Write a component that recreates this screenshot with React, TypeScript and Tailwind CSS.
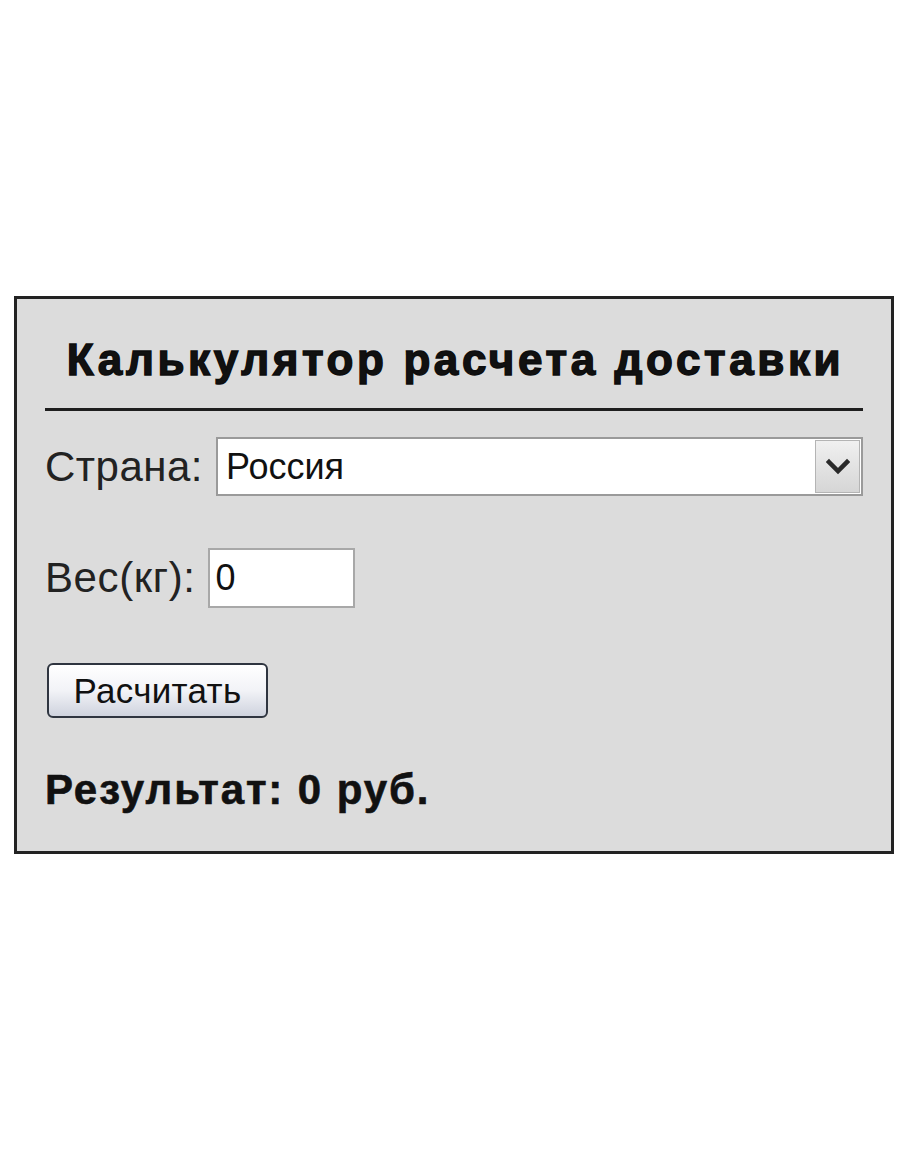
const ChevronDown = () => (
  <svg width="24" height="18" viewBox="0 0 24 18" fill="none">
    <path d="M3 4 L12 13 L21 4" stroke="#2a2a2a" strokeWidth="4.5" strokeLinecap="square" />
  </svg>
);

const App = () => {
  return (
    <div className="min-h-[1155px] bg-white pt-[296px] pl-[14px] font-['Liberation_Sans',Arial,sans-serif] text-[#111]">
      <div className="w-[880px] h-[558px] border-[3px] border-[#222] bg-[#dcdcdc] px-[28px] pt-[36px]">
        <h1 className="text-center text-[44px] leading-[50px] font-bold tracking-[3.6px] pl-[3px] [-webkit-text-stroke:1.4px_#0d0d0d]">
          Калькулятор расчета доставки
        </h1>
        <div className="mt-[23px] h-[3px] bg-[#1e1e1e]" />

        <div className="mt-[26px] flex items-center gap-[13px]">
          <span className="text-[42px] leading-[48px] tracking-[0.5px] text-[#222]">Страна:</span>
          <div className="flex-1 h-[59px] flex items-stretch border-2 border-[#9a9a9a] bg-white">
            <div className="flex-1 flex items-center pl-[8px] text-[36px] leading-none">Россия</div>
            <div className="w-[45px] m-[1px] flex items-center justify-center border border-[#b4b4b4] bg-gradient-to-b from-[#f0f0f0] to-[#d6d6d6]">
              <ChevronDown />
            </div>
          </div>
        </div>

        <div className="mt-[52px] flex items-center gap-[12px]">
          <span className="text-[42px] leading-[48px] tracking-[0.6px] text-[#222]">Вес(кг):</span>
          <div className="w-[147px] h-[60px] flex items-center border-2 border-[#a8a8a8] bg-white pl-[6px] text-[36px] leading-none">
            0
          </div>
        </div>

        <button
          type="button"
          className="mt-[55px] ml-[2px] w-[221px] h-[55px] rounded-[6px] border-2 border-[#2f3540] bg-gradient-to-b from-white via-[#f2f3f7] to-[#cfd3de] text-[35px] leading-none tracking-[0.3px] text-[#111]"
        >
          Расчитать
        </button>

        <div className="mt-[48px] text-[42px] leading-[48px] font-bold tracking-[1.9px] [-webkit-text-stroke:0.6px_#111]">
          Результат: 0 руб.
        </div>
      </div>
    </div>
  );
};

export default App;
